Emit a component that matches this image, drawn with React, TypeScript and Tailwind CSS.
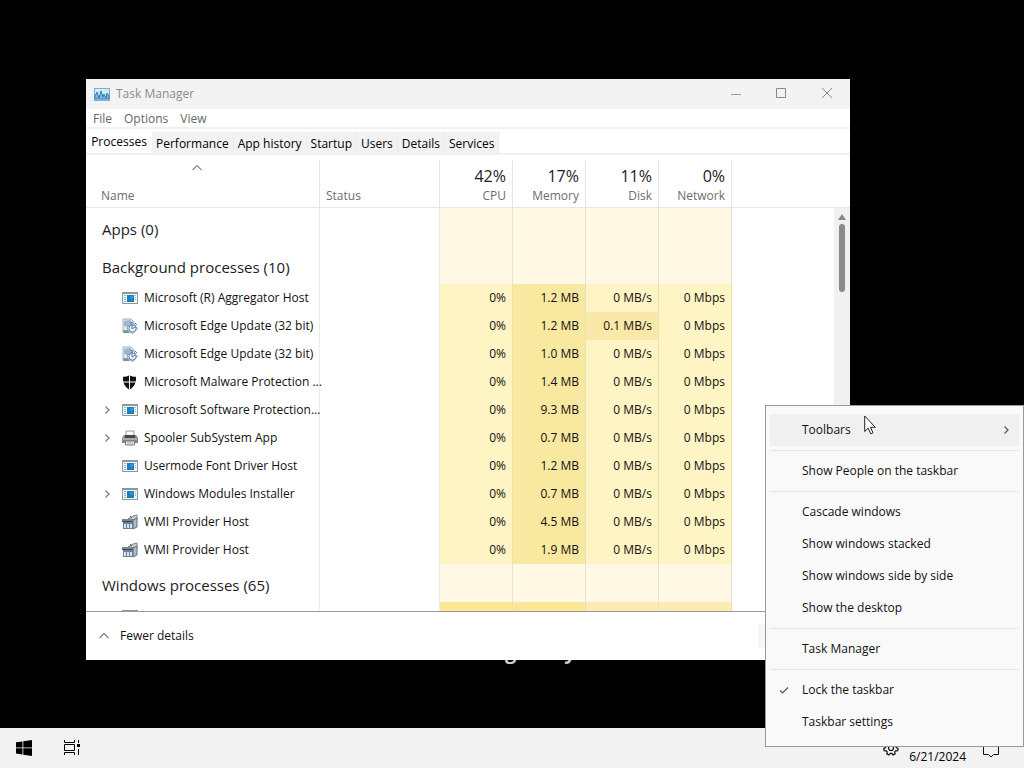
import React from "react";

type IconName = "app" | "update" | "shield" | "printer" | "wmi";

interface ProcessRow {
  icon: IconName;
  name: string;
  expandable?: boolean;
  memory: string;
  disk: string;
  busy?: boolean;
}

const processes: ProcessRow[] = [
  { icon: "app", name: "Microsoft (R) Aggregator Host", memory: "1.2 MB", disk: "0 MB/s" },
  { icon: "update", name: "Microsoft Edge Update (32 bit)", memory: "1.2 MB", disk: "0.1 MB/s", busy: true },
  { icon: "update", name: "Microsoft Edge Update (32 bit)", memory: "1.0 MB", disk: "0 MB/s" },
  { icon: "shield", name: "Microsoft Malware Protection ...", memory: "1.4 MB", disk: "0 MB/s" },
  { icon: "app", name: "Microsoft Software Protection...", memory: "9.3 MB", disk: "0 MB/s", expandable: true },
  { icon: "printer", name: "Spooler SubSystem App", memory: "0.7 MB", disk: "0 MB/s", expandable: true },
  { icon: "app", name: "Usermode Font Driver Host", memory: "1.2 MB", disk: "0 MB/s" },
  { icon: "app", name: "Windows Modules Installer", memory: "0.7 MB", disk: "0 MB/s", expandable: true },
  { icon: "wmi", name: "WMI Provider Host", memory: "4.5 MB", disk: "0 MB/s" },
  { icon: "wmi", name: "WMI Provider Host", memory: "1.9 MB", disk: "0 MB/s" },
];

const usage = [
  { value: "42%", label: "CPU" },
  { value: "17%", label: "Memory" },
  { value: "11%", label: "Disk" },
  { value: "0%", label: "Network" },
];

const tabs = ["Performance", "App history", "Startup", "Users", "Details", "Services"];

const ProcessIcon: React.FC<{ name: IconName }> = ({ name }) => {
  switch (name) {
    case "app":
      return (
        <svg width="16" height="16" viewBox="0 0 16 16" shapeRendering="crispEdges" className="shrink-0">
          <rect x="0" y="2" width="16" height="12" fill="#8d979d" />
          <rect x="1" y="4" width="14" height="9" fill="#f4f8fa" />
          <path d="M2 5h2v1H2zM2 7h2v1H2zM2 9h2v1H2zM2 11h2v1H2z" fill="#8fb2c9" />
          <rect x="5" y="5" width="7" height="7" fill="#1a7fc0" />
          <rect x="8" y="6" width="3" height="3" fill="#3594d0" />
          <path d="M13 5h1v1h-1zM13 7h1v1h-1zM13 9h1v1h-1z" fill="#8fb2c9" />
        </svg>
      );
    case "update":
      return (
        <svg width="16" height="16" viewBox="0 0 16 16" fill="none" className="shrink-0">
          <path d="M1 1h8l3 3v10H1z" fill="#dce7f0" stroke="#a3b3c0" />
          <path d="M2 3l6-1 3 4-5 3-4-1z" fill="#9db6cd" />
          <path d="M1 12h6v3H1z" fill="#93a58a" />
          <path d="M2 14h5" stroke="#5f7c94" />
          <path d="M11.500 5.500l4 5-4.500 5-5-2.500-.5-4z" fill="#e7f0f8" stroke="#7f9fbc" />
          <circle cx="10.500" cy="10.500" r="3.500" fill="#f3f8fc" stroke="#6489ab" />
          <path d="M10 6v5l3-2M8 4l3 1M13 5l2 2" stroke="#54799d" />
        </svg>
      );
    case "shield":
      return (
        <svg width="16" height="16" viewBox="0 0 16 16" className="shrink-0">
          <path d="M7.500 1c2 1.500 4 1.800 6.500 1.800C14.500 8.500 12.500 13 7.500 15.500 2.500 13 .5 8.500 1 2.800 3.500 2.800 5.500 2.500 7.500 1z" fill="#111" />
          <path d="M7.500 1v14M1 8h13" stroke="#fff" />
        </svg>
      );
    case "printer":
      return (
        <svg width="16" height="16" viewBox="0 0 16 16" fill="none" className="shrink-0">
          <path d="M4 7V1h8v6" fill="#fafafa" stroke="#9a9a9a" />
          <path d="M2 5h12l2 3v5H0V8z" fill="#85898c" />
          <path d="M3 5h10v3H3z" fill="#44484a" />
          <path d="M1 9h14" stroke="#cfd2d4" />
          <path d="M3.500 11h9v4h-9z" fill="#eef1f3" stroke="#777" />
          <path d="M5 13h6" stroke="#8da3b1" />
        </svg>
      );
    default:
      return (
        <svg width="16" height="16" viewBox="0 0 16 16" fill="none" className="shrink-0">
          <path d="M6 5l5-3 4-1v5z" fill="#c5cbd0" stroke="#80878e" />
          <path d="M8 2l2 2" stroke="#555f69" />
          <path d="M1 7h10v8H1z" fill="#6f8194" />
          <path d="M0 5h11v3H0z" fill="#7c848c" />
          <path d="M0 7.500h11" stroke="#3f4850" />
          <path d="M11 6l4-2v9l-4 2z" fill="#a9bac9" stroke="#66737f" />
          <path d="M2 10h2v4H2zM5 10h2v4H5zM8 10h2v4H8z" fill="#d5e3f2" />
        </svg>
      );
  }
};

const Chevron: React.FC<{ className: string }> = ({ className }) => (
  <svg width="10" height="10" viewBox="0 0 10 10" fill="none" className={className}>
    <path d="M3.500 1.500L7 5 3.500 8.500" stroke="currentColor" strokeWidth="1.200" />
  </svg>
);

const Caret: React.FC<{ className: string }> = ({ className }) => (
  <svg width="12" height="8" viewBox="0 0 12 8" fill="none" className={className}>
    <path d="M1.500 6l4.500-4.500L10.500 6" stroke="currentColor" strokeWidth="1.100" />
  </svg>
);

const GroupRow: React.FC<{ title: string }> = ({ title }) => (
  <tr className="h-[38px]">
    <th scope="rowgroup" className="border-r border-[#ececec] pt-1 pl-4 text-left text-[15px] leading-5 font-normal whitespace-nowrap text-[#1c1c1c]">
      {title}
    </th>
    <td className="border-r border-[#ececec]" />
    {usage.map((u) => (
      <td key={u.label} className="border-r border-[#e9e2cc] bg-[#fff8e4]" />
    ))}
    <td />
  </tr>
);

const ProcessTable = () => (
  <table className="w-full table-fixed border-separate border-spacing-0">
    <colgroup>
      <col className="w-[234px]" />
      <col className="w-[120px]" />
      <col className="w-[73px]" />
      <col className="w-[73px]" />
      <col className="w-[73px]" />
      <col className="w-[73px]" />
      <col />
    </colgroup>
    <thead>
      <tr className="h-12 align-bottom text-[#6d6d6d]">
        <th className="border-r border-b border-[#e6e6e6] pb-[3px] text-left font-normal">
          <Caret className="mr-auto mb-4 ml-[105px] text-[#888]" />
          <span className="block pl-[15px] leading-4">Name</span>
        </th>
        <th className="border-r border-b border-[#e6e6e6] pb-[3px] pl-1.5 text-left leading-4 font-normal">Status</th>
        {usage.map((u) => (
          <th key={u.label} className="border-r border-b border-[#e6e6e6] pr-1.5 pb-[3px] text-right font-normal">
            <span className="block pb-0.5 text-base leading-5 text-[#1c1c1c]">{u.value}</span>
            <span className="block leading-4">{u.label}</span>
          </th>
        ))}
        <td className="border-b border-[#e6e6e6]" />
      </tr>
    </thead>
    <tbody>
      <GroupRow title="Apps (0)" />
      <GroupRow title="Background processes (10)" />
      {processes.map((p, i) => (
        <tr key={i} className="h-7 text-right whitespace-nowrap text-[#111]">
          <td className="border-r border-[#ececec]">
            <div className="flex items-center pl-4">
              <span className="flex w-5 shrink-0">
                {p.expandable && (
                  <button type="button" aria-label={`Expand ${p.name}`}>
                    <Chevron className="text-[#777]" />
                  </button>
                )}
              </span>
              <ProcessIcon name={p.icon} />
              <span className="ml-1.5">{p.name}</span>
            </div>
          </td>
          <td className="border-r border-[#ececec]" />
          <td className="border-r border-[#ebe2b4] bg-[#fff4c4] pr-1.5">0%</td>
          <td className="border-r border-[#ebe2b4] bg-[#f9e8a0] pr-1.5">{p.memory}</td>
          <td className={`border-r border-[#ebe2b4] pr-1.5 ${p.busy ? "bg-[#f9e8a8]" : "bg-[#fff4c4]"}`}>{p.disk}</td>
          <td className="border-r border-[#ebe2b4] bg-[#fff4c4] pr-1.5">0 Mbps</td>
          <td />
        </tr>
      ))}
      <GroupRow title="Windows processes (65)" />
      <tr className="h-7">
        <td className="border-r border-[#ececec] pl-9 align-top">
          <span className="mt-2 block h-4 w-4 bg-[#8d979d]" />
        </td>
        <td className="border-r border-[#ececec]" />
        <td className="border-r border-[#ebe2b4] bg-[#fbe795]" />
        <td className="border-r border-[#ebe2b4] bg-[#fbe795]" />
        <td className="border-r border-[#ebe2b4] bg-[#fdebb5]" />
        <td className="border-r border-[#ebe2b4] bg-[#fdebb5]" />
        <td />
      </tr>
    </tbody>
  </table>
);

const TaskManager = () => (
  <section aria-label="Task Manager" className="absolute top-[79px] left-[86px] flex h-[581px] w-[764px] flex-col bg-white">
    {/* Title bar */}
    <header className="flex h-[30px] shrink-0 items-center bg-[#f3f3f3] pl-2 text-[#8b8b8b]">
      <svg width="16" height="13" viewBox="0 0 16 13" fill="none">
        <rect x="0.500" y="0.500" width="15" height="12" fill="#d6ebf8" stroke="#88a9c0" />
        <path d="M1 11V8l2-4 2 6 2-7 2 6 1-3 2 4 1-5 2 3v3z" fill="#77b8e5" stroke="#2f7fbd" />
      </svg>
      <h1 className="ml-1.5 flex-1">Task Manager</h1>
      <button type="button" aria-label="Minimize" className="flex w-[45px] justify-center">
        <svg width="12" height="12" viewBox="0 0 12 12"><path d="M1 6.500h10" stroke="#999" /></svg>
      </button>
      <button type="button" aria-label="Maximize" className="flex w-[45px] justify-center">
        <svg width="12" height="12" viewBox="0 0 12 12"><path d="M1.500 .5h9v9h-9z" fill="none" stroke="#888" /></svg>
      </button>
      <button type="button" aria-label="Close" className="flex w-[47px] justify-center">
        <svg width="12" height="12" viewBox="0 0 12 12"><path d="M1 0l10 10M11 0L1 10" stroke="#888" /></svg>
      </button>
    </header>

    {/* Menu bar */}
    <nav className="flex h-5 shrink-0 items-end gap-3 border-b-2 border-[#f1f1f1] pl-[7px] text-[#666]">
      <button type="button">File</button>
      <button type="button">Options</button>
      <button type="button">View</button>
    </nav>

    <div role="tablist" className="flex h-[26px] shrink-0 items-end border-b-2 border-[#f0f0f0] text-black">
      <button type="button" role="tab" aria-selected="true" className="h-full w-[66px] pt-0.5 text-center">
        Processes
      </button>
      {tabs.map((tab) => (
        <button key={tab} type="button" role="tab" aria-selected="false" className="h-[21px] border-r border-[#ebebeb] bg-[#f2f2f2] px-1 pt-0.5">
          {tab}
        </button>
      ))}
    </div>

    <div className="mt-[5px] flex min-h-0 flex-1 overflow-hidden">
      <div className="min-w-0 flex-1">
        <ProcessTable />
      </div>
      <div className="flex w-4 flex-col">
        <div className="h-12 shrink-0 border-b border-[#e6e6e6]" />
        <div className="flex flex-1 flex-col items-center bg-[#f1f1f1] pt-1.5">
          <svg width="8" height="6" viewBox="0 0 8 6"><path d="M4 0l4 6H0z" fill="#888" /></svg>
          <div className="mt-1 h-[68px] w-1.5 rounded-full bg-[#8b8b8b]" />
        </div>
      </div>
    </div>

    <footer className="flex h-[49px] shrink-0 items-center border-t border-[#999] pl-3 text-[#111]">
      <button type="button" className="flex items-center gap-2.5">
        <Caret className="text-[#777]" />
        Fewer details
      </button>
      <button type="button" disabled className="mr-2.5 ml-auto h-6 w-[82px] bg-[#f6f6f6]" aria-label="End task" />
    </footer>
  </section>
);

interface MenuItemProps {
  label: string;
  active?: boolean;
  checked?: boolean;
  submenu?: boolean;
}

const MenuItem: React.FC<MenuItemProps> = ({ label, active, checked, submenu }) => (
  <button
    type="button"
    role="menuitem"
    className={`flex h-8 items-center pr-2 pl-1 text-left ${active ? "bg-[#f0f0f0]" : ""}`}
  >
    <span className="flex w-7 pl-[5px]">
      {checked && (
        <svg width="10" height="10" viewBox="0 0 10 10" fill="none">
          <path d="M1 5.500l2.500 2.500L9 2.500" stroke="#555" strokeWidth="1.200" />
        </svg>
      )}
    </span>
    <span className="flex-1">{label}</span>
    {submenu && <Chevron className="text-[#555]" />}
  </button>
);

const Divider = () => <hr className="my-1 border-[#e6e6e6]" />;

const TaskbarMenu = () => (
  <div role="menu" className="absolute right-0 bottom-[21px] flex w-[259px] flex-col border border-[#999] bg-[#f9f9f9] px-1 py-2 text-[#111]">
    <MenuItem label="Toolbars" active submenu />
    <Divider />
    <MenuItem label="Show People on the taskbar" />
    <Divider />
    <MenuItem label="Cascade windows" />
    <MenuItem label="Show windows stacked" />
    <MenuItem label="Show windows side by side" />
    <MenuItem label="Show the desktop" />
    <Divider />
    <MenuItem label="Task Manager" />
    <Divider />
    <MenuItem label="Lock the taskbar" checked />
    <MenuItem label="Taskbar settings" />
  </div>
);

const Taskbar = () => (
  <footer className="flex h-10 items-center bg-[#f2f2f2] pl-4">
    <button type="button" aria-label="Start">
      <svg width="16" height="16" viewBox="0 0 16 16">
        <path d="M0 2.300l6.500-.9v6.100H0zM7.300 1.300L16 0v7.500H7.300zM0 8.300h6.500v6.200L0 13.600zM7.300 8.300H16V16l-8.700-1.300z" fill="#000" />
      </svg>
    </button>
    <button type="button" aria-label="Task View" className="ml-8">
      <svg width="16" height="16" viewBox="0 0 16 16" fill="none" stroke="#000">
        <path d="M.5 0v2.500h10V0M.5 4.500h10v6H.5zM.5 15v-2.500h10V15M14.500 0v3M14.500 9v6" />
        <path d="M13 4h3v3h-3z" fill="#000" stroke="none" />
      </svg>
    </button>
    <div className="ml-auto flex h-full items-center">
      <button type="button" aria-label="Settings" className="mr-2.5">
        <svg width="16" height="16" viewBox="0 0 16 16" fill="none" stroke="#111" strokeWidth="1.200">
          <path d="M6.800 1h2.400l.4 2 1.200.6 1.900-.9 1.500 1.800-1.200 1.700.3 1.400 1.900.9-.5 2.200-2.100.1-.9 1.100.4 2-2.100 1L8.700 13.300H7.300L5.900 14.900l-2.100-1 .4-2-.9-1.100-2.100-.1-.5-2.200 1.900-.9.3-1.400L1.800 4.500l1.500-1.800 1.900.9L6.400 3z" />
          <circle cx="8" cy="8" r="2.500" />
        </svg>
      </button>
      <time className="mt-[18px]" dateTime="2024-06-21">6/21/2024</time>
      <button type="button" aria-label="Notifications" className="mt-1 mr-6 ml-4">
        <svg width="18" height="16" viewBox="0 0 18 16" fill="none" stroke="#111">
          <path d="M1.500 1.500h15v11h-5l-2.500 2.500-2.500-2.500h-5z" />
        </svg>
      </button>
    </div>
  </footer>
);

const App = () => (
  <div className="relative flex h-screen flex-col justify-end overflow-hidden bg-black font-['Open_Sans','Noto_Sans',sans-serif] text-xs">
    <div className="absolute top-[640px] left-[505px] flex gap-12 text-xl leading-6 font-bold text-[#ccc]">
      <span>g</span>
      <span>y</span>
    </div>
    <Taskbar />
    <TaskManager />
    <TaskbarMenu />
    {/* Mouse pointer */}
    <svg width="12" height="20" viewBox="0 0 12 20" className="pointer-events-none absolute top-[415px] left-[864px]">
      <path d="M.7 1v15.500l3.500-3.300 2.500 5.600 2.300-1-2.500-5.500h4.800z" fill="#fff" stroke="#222" />
    </svg>
  </div>
);

export default App;
